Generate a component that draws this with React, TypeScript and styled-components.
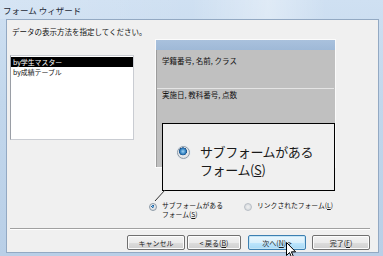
import React from 'react';
import styled, { createGlobalStyle } from 'styled-components';

const Global = createGlobalStyle`
  html, body { margin: 0; padding: 0; background: #ffffff; }
  body { font-family: "Noto Sans CJK JP", "Noto Sans", sans-serif; color: #111; }
  * { box-sizing: border-box; }
`;

const Window = styled.div`
  position: relative;
  width: 383px;
  height: 256px;
  display: flex;
  flex-direction: column;
  overflow: hidden;
  background: linear-gradient(180deg, #cfe0f2 0%, #c2d7ec 40%, #b9cfe7 100%);
`;

const TitleBar = styled.div`
  height: 19px;
  flex: none;
  display: flex;
  align-items: center;
  padding-left: 3px;
  font-size: 8.5px;
  color: #1e2a36;
  background: linear-gradient(90deg, rgba(255,255,255,0.15) 0%, rgba(255,255,255,0) 50%, rgba(255,255,255,0.35) 70%, rgba(255,255,255,0) 85%);
`;

const Client = styled.div`
  position: relative;
  flex: 1;
  margin: 0 4px 3px 6px;
  background: #f0f0f0;
  border: 1px solid #93a9c3;
  display: flex;
  flex-direction: column;
  padding: 0 8px 0 3px;
`;

const TopArea = styled.div`
  display: flex;
  height: 207px;
`;

const LeftCol = styled.div`
  width: 124px;
  display: flex;
  flex-direction: column;
`;

const Prompt = styled.div`
  margin: 7px 0 0 2px;
  font-size: 7.5px;
  line-height: 10px;
  white-space: nowrap;
`;

const ListBox = styled.div`
  margin-top: 18px;
  height: 85px;
  background: #ffffff;
  border: 1px solid #c9ccd2;
  border-left-color: #9a9ea6;
  padding-top: 1px;
`;

const ListItem = styled.div<{ $selected?: boolean }>`
  height: 10px;
  line-height: 10px;
  font-size: 6.9px;
  padding-left: 2px;
  white-space: nowrap;
  background: ${p => (p.$selected ? '#000000' : 'transparent')};
  color: ${p => (p.$selected ? '#ffffff' : '#111111')};
`;

const RightCol = styled.div`
  margin-left: 15px;
  display: flex;
  flex-direction: column;
`;

const Panel = styled.div`
  margin: 19px 0 0 6px;
  width: 181px;
  height: 129px;
  background: #c0c0c0;
  border: 1px solid #fbfbfb;
  box-shadow: inset 1px 0 0 #9c9c9c;
  display: flex;
  flex-direction: column;
`;

const PanelHeader = styled.div`
  height: 10px;
  background: linear-gradient(180deg, #a9c1dd, #9fb9d7);
`;

const PanelRow = styled.div<{ $h: number; $top: number }>`
  height: ${p => p.$h}px;
  padding: ${p => p.$top}px 0 0 6px;
  font-size: 7.5px;
  line-height: 9px;
  white-space: nowrap;
`;

const PanelRule = styled.div`
  height: 1px;
  margin: 0 1px;
  background: #e4e4e4;
`;

const RadioRow = styled.div`
  margin-top: 34px;
  display: flex;
`;

const RadioOption = styled.div<{ $w: number }>`
  width: ${p => p.$w}px;
  display: flex;
  align-items: flex-start;
  gap: 5px;
`;

const RadioDot = styled.span<{ $checked?: boolean; $size: number }>`
  flex: none;
  margin-top: ${p => (p.$size > 10 ? 0 : 1)}px;
  width: ${p => p.$size}px;
  height: ${p => p.$size}px;
  border-radius: 50%;
  border: 1px solid ${p => (p.$checked ? '#8c99a6' : '#b8bec5')};
  background: ${p =>
    p.$checked
      ? `radial-gradient(circle at 45% 40%, #9fd4f5 0%, #2f7fc0 ${p.$size * 2.4}%, #1b4f86 ${p.$size * 3.3}%, #e8eaec ${p.$size * 3.6}%, #d6dadf 100%)`
      : 'radial-gradient(circle, #f1f1f1 0%, #dcdfe2 60%, #cfd3d8 100%)'};
  box-shadow: 0 0 0 ${p => (p.$size > 10 ? 1 : 0)}px #e9edf1;
`;

const RadioLabel = styled.span`
  font-size: 6.8px;
  line-height: 9px;
  white-space: nowrap;
  margin-top: -1px;
`;

const Separator = styled.div`
  height: 2px;
  margin: 1px 0 0 0;
  border-top: 1px solid #a0a0a0;
  border-bottom: 1px solid #ffffff;
`;

const ButtonRow = styled.div`
  margin-top: 5px;
  display: flex;
  justify-content: flex-end;
`;

const Button = styled.div<{ $focused?: boolean; $gap: number; $w: number }>`
  width: ${p => p.$w}px;
  height: 15px;
  margin-left: ${p => p.$gap}px;
  display: flex;
  align-items: center;
  justify-content: center;
  font-size: 7px;
  white-space: nowrap;
  border-radius: 2px;
  border: 1px solid ${p => (p.$focused ? '#3c7fb1' : '#707070')};
  background: ${p =>
    p.$focused
      ? 'linear-gradient(180deg, #eaf6fd 0%, #d9f0fc 50%, #bee6fd 51%, #a7d9f5 100%)'
      : 'linear-gradient(180deg, #f2f2f2 0%, #ebebeb 50%, #dddddd 51%, #cfcfcf 100%)'};
  box-shadow: inset 0 0 0 1px ${p => (p.$focused ? '#c4e5f6' : '#fcfcfc')};
  color: #1a1a1a;
`;

const Callout = styled.div`
  position: absolute;
  left: 155px;
  top: 103px;
  width: 173px;
  height: 68px;
  background: #f0f0f0;
  border: 1px solid #000;
  display: flex;
  align-items: flex-start;
  padding: 22px 0 0 14px;
  gap: 10px;
`;

const CalloutText = styled.div`
  font-size: 13px;
  line-height: 18px;
  letter-spacing: -0.4px;
  color: #1a1a1a;
  margin-top: -3px;
`;

const Pointer = styled.svg`
  position: absolute;
  left: 146px;
  top: 170px;
  overflow: visible;
`;

const Cursor = styled.svg`
  position: absolute;
  left: 286px;
  top: 242px;
`;

export default function App() {
  return (
    <>
      <Global />
      <Window>
        <TitleBar>フォーム ウィザード</TitleBar>
        <Client>
          <TopArea>
            <LeftCol>
              <Prompt>データの表示方法を指定してください。</Prompt>
              <ListBox>
                <ListItem $selected>by学生マスター</ListItem>
                <ListItem>by成績テーブル</ListItem>
              </ListBox>
            </LeftCol>
            <RightCol>
              <Panel>
                <PanelHeader />
                <PanelRow $h={38} $top={6}>学籍番号, 名前, クラス</PanelRow>
                <PanelRule />
                <PanelRow $h={40} $top={1}>実施日, 教科番号, 点数</PanelRow>
              </Panel>
              <RadioRow>
                <RadioOption $w={95}>
                  <RadioDot $checked $size={8} />
                  <RadioLabel>
                    サブフォームがある
                    <br />
                    フォーム(<u>S</u>)
                  </RadioLabel>
                </RadioOption>
                <RadioOption $w={100}>
                  <RadioDot $size={8} />
                  <RadioLabel>
                    リンクされたフォーム(<u>L</u>)
                  </RadioLabel>
                </RadioOption>
              </RadioRow>
            </RightCol>
          </TopArea>
          <Separator />
          <ButtonRow>
            <Button $w={58} $gap={0}>キャンセル</Button>
            <Button $w={54} $gap={2}>&lt; 戻る(<u>B</u>)</Button>
            <Button $w={58} $gap={7} $focused>次へ(<u>N</u>) &gt;</Button>
            <Button $w={58} $gap={6}>完了(<u>F</u>)</Button>
          </ButtonRow>
          <Callout>
            <RadioDot $checked $size={13} />
            <CalloutText>
              サブフォームがある
              <br />
              フォーム(<u>S</u>)
            </CalloutText>
          </Callout>
          <Pointer width="12" height="14" viewBox="0 0 12 14">
            <line x1="12" y1="0" x2="2" y2="11" stroke="#333" strokeWidth="1" />
          </Pointer>
        </Client>
        <Cursor width="11" height="17" viewBox="0 0 11 17">
          <path d="M0.5 0.5 L0.5 13.5 L3.5 10.5 L5.8 15.8 L7.6 15 L5.4 9.8 L9.6 9.8 Z" fill="#ffffff" stroke="#000" strokeWidth="1" strokeLinejoin="round" />
        </Cursor>
      </Window>
    </>
  );
}
